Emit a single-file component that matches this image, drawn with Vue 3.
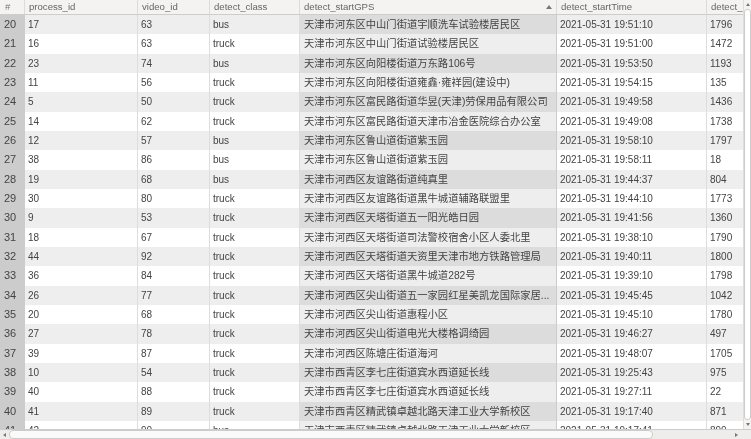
<script setup>
const rows = [
  [20, 17, 63, 'bus', '天津市河东区中山门街道宇顺洗车试验楼居民区', '19:51:10', 1796],
  [21, 16, 63, 'truck', '天津市河东区中山门街道试验楼居民区', '19:51:00', 1472],
  [22, 23, 74, 'bus', '天津市河东区向阳楼街道万东路106号', '19:53:50', 1193],
  [23, 11, 56, 'truck', '天津市河东区向阳楼街道雍鑫·雍祥园(建设中)', '19:54:15', 135],
  [24, 5, 50, 'truck', '天津市河东区富民路街道华昱(天津)劳保用品有限公司', '19:49:58', 1436],
  [25, 14, 62, 'truck', '天津市河东区富民路街道天津市冶金医院综合办公室', '19:49:08', 1738],
  [26, 12, 57, 'bus', '天津市河东区鲁山道街道紫玉园', '19:58:10', 1797],
  [27, 38, 86, 'bus', '天津市河东区鲁山道街道紫玉园', '19:58:11', 18],
  [28, 19, 68, 'bus', '天津市河西区友谊路街道纯真里', '19:44:37', 804],
  [29, 30, 80, 'truck', '天津市河西区友谊路街道黑牛城道辅路联盟里', '19:44:10', 1773],
  [30, 9, 53, 'truck', '天津市河西区天塔街道五一阳光皓日园', '19:41:56', 1360],
  [31, 18, 67, 'truck', '天津市河西区天塔街道司法警校宿舍小区人委北里', '19:38:10', 1790],
  [32, 44, 92, 'truck', '天津市河西区天塔街道天资里天津市地方铁路管理局', '19:40:11', 1800],
  [33, 36, 84, 'truck', '天津市河西区天塔街道黑牛城道282号', '19:39:10', 1798],
  [34, 26, 77, 'truck', '天津市河西区尖山街道五一家园红星美凯龙国际家居...', '19:45:45', 1042],
  [35, 20, 68, 'truck', '天津市河西区尖山街道惠程小区', '19:45:10', 1780],
  [36, 27, 78, 'truck', '天津市河西区尖山街道电光大楼格调绮园', '19:46:27', 497],
  [37, 39, 87, 'truck', '天津市河西区陈塘庄街道海河', '19:48:07', 1705],
  [38, 10, 54, 'truck', '天津市西青区李七庄街道宾水西道延长线', '19:25:43', 975],
  [39, 40, 88, 'truck', '天津市西青区李七庄街道宾水西道延长线', '19:27:11', 22],
  [40, 41, 89, 'truck', '天津市西青区精武镇卓越北路天津工业大学新校区', '19:17:40', 871],
  [41, 42, 90, 'bus', '天津市西青区精武镇卓越北路天津工业大学新校区', '19:17:41', 890],
]
</script>

<template>
  <div class="window">
    <div class="main">
      <div class="table">
        <div class="head">
          <div class="hc c0 hash">#</div>
          <div class="hc c1">process_id</div>
          <div class="hc c2">video_id</div>
          <div class="hc c3">detect_class</div>
          <div class="hc c4 sorted">detect_startGPS<span class="arrow"></span></div>
          <div class="hc c5">detect_startTime</div>
          <div class="hc c6">detect_</div>
        </div>
        <div class="body">
          <div v-for="(r, i) in rows" :key="r[0]" class="row" :class="{ odd: i % 2 === 0 }">
            <div class="c c0 num">{{ r[0] }}</div>
            <div class="c c1">{{ r[1] }}</div>
            <div class="c c2">{{ r[2] }}</div>
            <div class="c c3">{{ r[3] }}</div>
            <div class="c c4 gps">{{ r[4] }}</div>
            <div class="c c5">2021-05-31 {{ r[5] }}</div>
            <div class="c c6">{{ r[6] }}</div>
          </div>
        </div>
      </div>
      <div class="vbar">
        <span class="vup"></span>
        <div class="vthumb"></div>
        <span class="vdown"></span>
      </div>
    </div>
    <div class="hbar">
      <span class="hleft"></span>
      <div class="hthumb"></div>
      <span class="hright"></span>
    </div>
  </div>
</template>

<style scoped>
.window {
  width: 751px;
  height: 439px;
  display: flex;
  flex-direction: column;
  overflow: hidden;
  background: #fff;
  color: #444;
  font: 10px "Liberation Sans", "Noto Sans CJK SC", sans-serif;
  filter: blur(0.45px);
}
.main { flex: 1; min-height: 0; display: flex; }
.table { width: 743px; overflow: hidden; }
.head {
  height: 15px;
  display: flex;
  background: #f4f3f1;
  border-bottom: 1px solid #cfcdc9;
  box-sizing: border-box;
  color: #666;
  font-size: 9.6px;
}
.hc { line-height: 14px; padding-left: 4px; border-right: 1px solid #dddbd7; box-sizing: border-box; position: relative; white-space: nowrap; overflow: hidden; }
.hash { color: #777; padding-left: 5px; }
.arrow {
  position: absolute;
  right: 4px;
  top: 5px;
  border-left: 3px solid transparent;
  border-right: 3px solid transparent;
  border-bottom: 4px solid #777;
}
.row { height: 19.33px; display: flex; }
.row.odd { background: #eee; }
.c { line-height: 19.33px; padding-left: 3px; box-sizing: border-box; white-space: nowrap; overflow: hidden; border-right: 1px solid #ddd; font-size: 10px; }
.c0 { width: 25px; flex: none; }
.c1 { width: 113px; flex: none; }
.c2 { width: 72px; flex: none; }
.c3 { width: 90px; flex: none; }
.c4 { width: 257px; flex: none; }
.c5 { width: 150px; flex: none; }
.c6 { width: 36px; flex: none; border-right: 0; }
.num { background: #ccc; border-right: 0; font-size: 11px; padding-left: 4px; }
.gps { background: #eee; font-size: 10.3px; padding-left: 4px; border-right-color: #ccc; }
.odd .gps { background: #dcdcdc; }
.vbar {
  width: 8px;
  flex: none;
  background: #f4f3f1;
  display: flex;
  flex-direction: column;
  align-items: center;
  border-left: 1px solid #ddd;
  box-sizing: border-box;
  padding: 3px 0;
  gap: 3px;
}
.vthumb { flex: 1; width: 100%; background: #fff; border: 1px solid #ccc; border-radius: 3px; box-sizing: border-box; }
.vup {
  flex: none;
  border-left: 2px solid transparent;
  border-right: 2px solid transparent;
  border-bottom: 3px solid #777;
}
.vdown {
  flex: none;
  border-left: 2px solid transparent;
  border-right: 2px solid transparent;
  border-top: 3px solid #777;
}
.hbar {
  height: 10px;
  flex: none;
  background: #eeedeb;
  border-top: 1px solid #ccc;
  box-sizing: border-box;
  display: flex;
  align-items: stretch;
  padding-left: 3px;
  gap: 3px;
  position: relative;
}
.hthumb { background: #fafafa; border: 1px solid #ccc; border-radius: 4px; box-sizing: border-box; flex: none; width: 644px; }
.hleft, .hright { align-self: center; border-top: 2px solid transparent; border-bottom: 2px solid transparent; flex: none; }
.hleft { border-right: 3px solid #777; }
.hright { border-left: 3px solid #777; margin-left: 79px; }
</style>
